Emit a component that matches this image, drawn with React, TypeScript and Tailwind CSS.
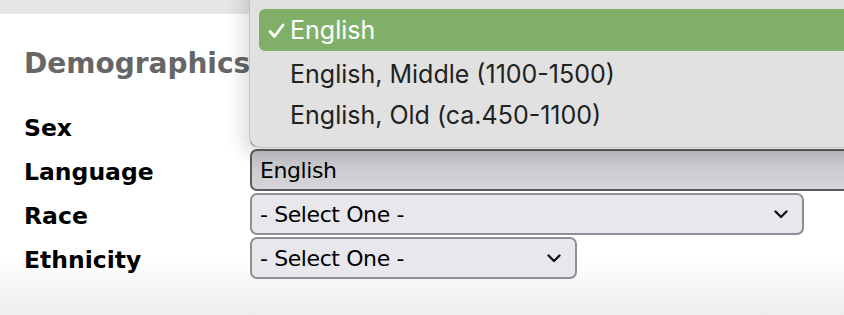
import React from "react";

const Chevron = () => (
  <svg width="14" height="9" viewBox="0 0 14 9" fill="none">
    <path d="M1.5 1.5 L7 7 L12.5 1.5" stroke="#111" strokeWidth="2.4" strokeLinecap="round" strokeLinejoin="round" />
  </svg>
);

const Check = () => (
  <svg width="17" height="16" viewBox="0 0 17 16" fill="none">
    <path d="M2 8.5 L6.5 13.5 L15 2" stroke="#fff" strokeWidth="2.8" strokeLinecap="round" strokeLinejoin="round" />
  </svg>
);

const labelCls = "shrink-0 w-[226px] pt-[3px] font-['DejaVu_Sans',Verdana,sans-serif] font-bold text-[23.5px] leading-[28px] text-black";

function SelectBox({ w, text, active }: { w: string; text: string; active?: boolean }) {
  return (
    <div
      className={
        "shrink-0 h-[42px] rounded-[7px] border-2 flex items-center justify-between pl-[8px] pr-[14px] font-['DejaVu_Sans',Verdana,sans-serif] text-[22px] tracking-[-0.4px] text-black " +
        w +
        (active
          ? " border-[#5c5b62] bg-gradient-to-b from-[#c4c3c8] to-[#d6d5da]"
          : " border-[#908e97] bg-[#e8e7ec]")
      }
    >
      <span>{text}</span>
      {!active && text && <Chevron />}
    </div>
  );
}

export default function App() {
  const rows = [
    { label: "Sex", w: "w-[554px]", text: "" },
    { label: "Language", w: "w-[620px]", text: "English", active: true },
    { label: "Race", w: "w-[554px]", text: "- Select One -" },
    { label: "Ethnicity", w: "w-[327px]", text: "- Select One -" },
  ];
  return (
    <div className="relative w-[844px] h-[315px] overflow-hidden bg-gradient-to-b from-white from-[82%] to-[#eeeeee]">
      <div className="h-[14px] bg-[#e6e6e6]" />
      <div className="pl-[24px]">
        <h2 className="mt-[34px] font-['DejaVu_Sans',Verdana,sans-serif] font-bold text-[28px] leading-[32px] text-[#666666]">
          Demographics
        </h2>
        <div className="mt-[24px] flex flex-col">
          {rows.map((r) => (
            <div key={r.label} className="flex items-center h-[44px]">
              <div className={labelCls}>{r.label}</div>
              <SelectBox w={r.w} text={r.text} active={r.active} />
            </div>
          ))}
        </div>
      </div>

      <div className="absolute left-[249px] top-[-20px] w-[640px] h-[168px] bg-[#e1e1e1] rounded-bl-[12px] border border-[#c4c4c4] shadow-[-6px_6px_18px_rgba(0,0,0,0.14)] pt-[28px] pl-[9px] font-['Inter','Liberation_Sans',sans-serif] text-[25px]">
        <div className="h-[42px] rounded-l-[6px] bg-[#80b068] flex items-center pt-[1px] text-white">
          <span className="w-[31px] pl-[9px] flex items-center"><Check /></span>
          <span>English</span>
        </div>
        <div className="h-[43px] flex items-center pl-[31px] pt-[4px] text-[#222222]">English, Middle (1100-1500)</div>
        <div className="h-[40px] flex items-center pl-[31px] pt-[4px] text-[#222222]">English, Old (ca.450-1100)</div>
      </div>
    </div>
  );
}
